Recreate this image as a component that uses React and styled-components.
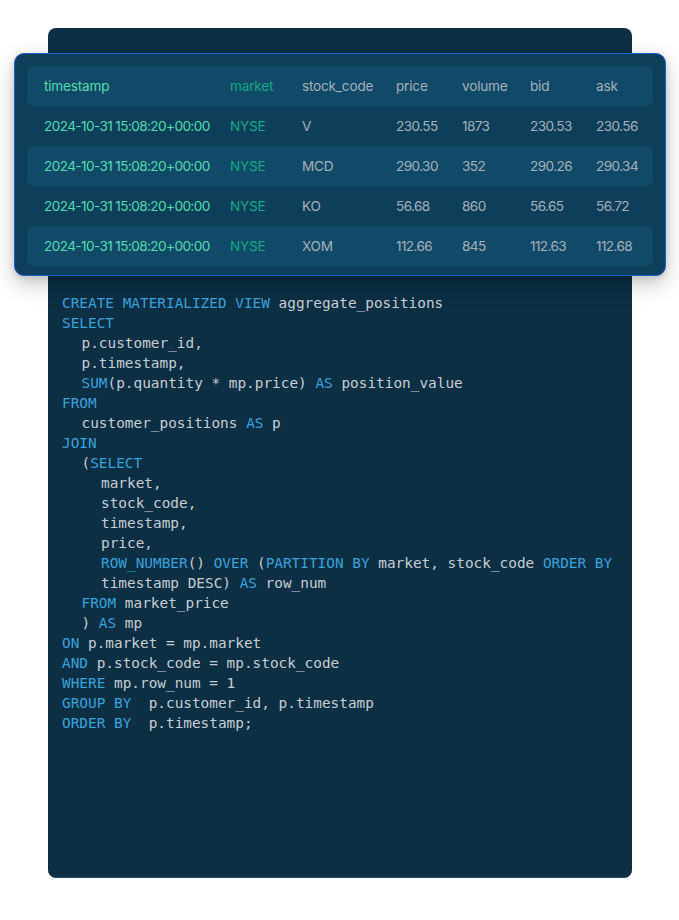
import styled, { createGlobalStyle } from 'styled-components';

const GlobalStyle = createGlobalStyle`
    body {
        margin: 0;
        background: #ffffff;
    }
`

const Page = styled.div`
    width: 679px;
    height: 920px;
    padding-top: 28px;
    box-sizing: border-box;
`

const Card = styled.section`
    margin-left: 48px;
    width: 584px;
    height: 850px;
    box-sizing: border-box;
    padding-top: 25px;
    background: #0c2f44;
    border-radius: 8px;
    border-bottom: 1px solid #1f4a60;
`

const Panel = styled.div`
    margin: 0 -34px;
    padding: 12px 12px 9px;
    background: #0d3e5a;
    border: 1px solid #1d5ed0;
    border-radius: 10px;
    box-shadow: 0 8px 22px rgba(0, 0, 0, 0.22), 0 2px 6px rgba(0, 0, 0, 0.12);
    display: flex;
    flex-direction: column;
`

const Row = styled.div`
    display: grid;
    grid-template-columns: 186px 72px 94px 66px 68px 66px 1fr;
    align-items: center;
    height: 40px;
    padding-left: 17px;
    border-radius: 7px;
    background: ${p => p.$shade ? '#114a68' : 'transparent'};
    font-family: Inter, "Liberation Sans", sans-serif;
    font-size: 13.6px;
    letter-spacing: -0.2px;
`

const Cell = styled.span`
    color: ${p => p.$tone === 'time' ? '#52dcae' : p.$tone === 'market' ? '#17a886' : '#a3b1bc'};
    letter-spacing: ${p => p.$tight ? '-0.6px' : '-0.2px'};
    white-space: nowrap;
`

const Code = styled.pre`
    margin: 17px 0 0;
    padding-left: 14px;
    font-family: "DejaVu Sans Mono", "Liberation Mono", monospace;
    font-size: 14.4px;
    line-height: 20px;
    color: #c6ced4;
`

const Line = styled.div`
    padding-left: ${p => p.$indent * 19.5}px;
    white-space: pre;
`

const Kw = styled.span`
    color: #3aa2dc;
`

const columns = ['timestamp', 'market', 'stock_code', 'price', 'volume', 'bid', 'ask']

const rows = [
    ['V', '230.55', '1873', '230.53', '230.56'],
    ['MCD', '290.30', '352', '290.26', '290.34'],
    ['KO', '56.68', '860', '56.65', '56.72'],
    ['XOM', '112.66', '845', '112.63', '112.68'],
]

// each line: indent level, then parts; [text, true] means keyword
const sql = [
    [0, ['CREATE MATERIALIZED VIEW', true], ' aggregate_positions'],
    [0, ['SELECT', true]],
    [1, 'p.customer_id,'],
    [1, 'p.timestamp,'],
    [1, ['SUM', true], '(p.quantity * mp.price) ', ['AS', true], ' position_value'],
    [0, ['FROM', true]],
    [1, 'customer_positions ', ['AS', true], ' p'],
    [0, ['JOIN', true]],
    [1, '(', ['SELECT', true]],
    [2, 'market,'],
    [2, 'stock_code,'],
    [2, 'timestamp,'],
    [2, 'price,'],
    [2, ['ROW_NUMBER', true], '() ', ['OVER', true], ' (', ['PARTITION BY', true], ' market, stock_code ', ['ORDER BY', true]],
    [2, 'timestamp DESC) ', ['AS', true], ' row_num'],
    [1, ['FROM', true], ' market_price'],
    [1, ') ', ['AS', true], ' mp'],
    [0, ['ON', true], ' p.market = mp.market'],
    [0, ['AND', true], ' p.stock_code = mp.stock_code'],
    [0, ['WHERE', true], ' mp.row_num = 1'],
    [0, ['GROUP BY', true], '  p.customer_id, p.timestamp'],
    [0, ['ORDER BY', true], '  p.timestamp;'],
]

const App = () => {
    return (
        <Page>
            <GlobalStyle />
            <Card>
                <Panel>
                    <Row $shade>
                        {columns.map((c, i) => (
                            <Cell key={c} $tone={i === 0 ? 'time' : i === 1 ? 'market' : 'plain'}>{c}</Cell>
                        ))}
                    </Row>
                    {rows.map((r, i) => (
                        <Row key={r[0]} $shade={i % 2 === 1}>
                            <Cell $tone="time" $tight>2024-10-31 15:08:20+00:00</Cell>
                            <Cell $tone="market">NYSE</Cell>
                            {r.map((v, j) => <Cell key={j} $tight={j > 0}>{v}</Cell>)}
                        </Row>
                    ))}
                </Panel>
                <Code>
                    {sql.map(([indent, ...parts], i) => (
                        <Line key={i} $indent={indent}>
                            {parts.map((p, j) => Array.isArray(p) ? <Kw key={j}>{p[0]}</Kw> : <span key={j}>{p}</span>)}
                        </Line>
                    ))}
                </Code>
            </Card>
        </Page>
    )
}

export default App;
